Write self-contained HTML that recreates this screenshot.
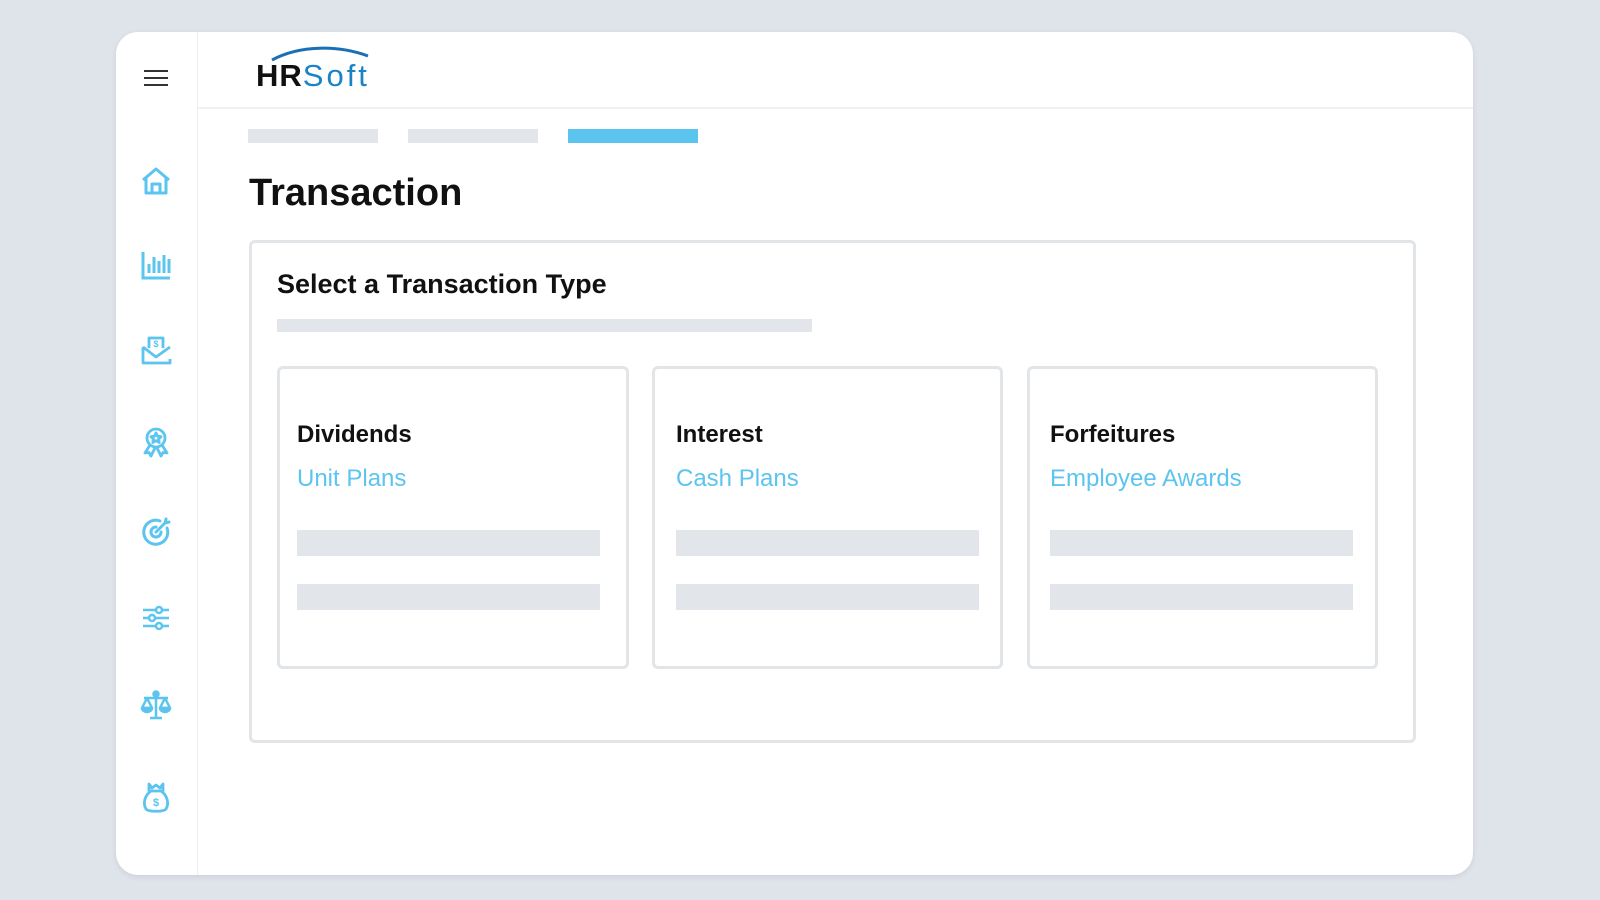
<!DOCTYPE html>
<html><head><meta charset="utf-8"><style>
*{margin:0;padding:0;box-sizing:border-box}
body{width:1600px;height:900px;background:#dfe3ea;font-family:"Liberation Sans",sans-serif;position:relative;overflow:hidden}
.card{position:absolute;left:116px;top:32px;width:1357px;height:843px;background:#fff;border-radius:22px;box-shadow:0 2px 6px rgba(0,0,0,.08);overflow:hidden}
.side{position:absolute;left:0;top:0;width:82px;height:100%;border-right:1px solid #eceef1}
.hdr{position:absolute;left:82px;top:0;right:0;height:77px;border-bottom:2px solid #f0f1f3}
.abs{position:absolute}
.bar{position:absolute;background:#e2e5e9}
.ic{position:absolute;left:24px;width:32px;height:32px}
.box{position:absolute;border:3px solid #e2e5e8;border-radius:6px}
.t{position:absolute;color:#111;font-weight:bold;white-space:nowrap}
.l{position:absolute;color:#5bc4ef;font-size:24px;white-space:nowrap}
</style></head><body>
<div class="card">
 <div class="side">
  <svg class="ic" style="top:30px" viewBox="0 0 32 32"><path d="M4 9h24M4 16h24M4 23h24" stroke="#333" stroke-width="2"/></svg>
  <svg class="ic" style="top:133px" viewBox="0 0 32 32" fill="none" stroke="#5bc4ef" stroke-width="3" stroke-linejoin="round"><path d="M3 15 16 4l13 11M6 13v15h20V13M12 28v-9h8v9"/></svg>
  <svg class="ic" style="top:217px" viewBox="0 0 32 32" fill="none" stroke="#5bc4ef" stroke-width="3"><path d="M3 3v26h27M9 24v-9M14 24V8M19 24v-12M24 24V6M29 24V10"/></svg>
  <svg class="ic" style="top:303px" viewBox="0 0 32 32" fill="none" stroke="#5bc4ef" stroke-width="2.8" stroke-linejoin="round"><path d="M9 13V3h14v10M3 12v16h27v-4M3 12l13 10 14-10"/><text x="16" y="12" font-size="9" font-weight="bold" fill="#5bc4ef" stroke="none" text-anchor="middle" font-family="Liberation Sans">$</text></svg>
  <svg class="ic" style="top:394px" viewBox="0 0 32 32" fill="none" stroke="#5bc4ef" stroke-width="2.8" stroke-linejoin="round"><circle cx="16" cy="12" r="9"/><path d="M16 7l1.6 3.3 3.4.4-2.5 2.4.7 3.4-3.2-1.8-3.2 1.8.7-3.4-2.5-2.4 3.4-.4z"/><path d="M10 19l-5 8 4-.5 2 3.5 4-8M22 19l5 8-4-.5-2 3.5-4-8"/></svg>
  <svg class="ic" style="top:484px" viewBox="0 0 32 32" fill="none" stroke="#5bc4ef" stroke-width="3" stroke-linecap="round"><path d="M27 12a12 12 0 1 1-7-7"/><path d="M21 16a5 5 0 1 1-5-5"/><path d="M16 16 25 7M25 7l1-4M25 7l4-1"/></svg>
  <svg class="ic" style="top:570px" viewBox="0 0 32 32" fill="none" stroke="#5bc4ef" stroke-width="2.5"><path d="M3 8h26M3 16h26M3 24h26"/><circle cx="19" cy="8" r="3" fill="#fff"/><circle cx="12" cy="16" r="3" fill="#fff"/><circle cx="19" cy="24" r="3" fill="#fff"/></svg>
  <svg class="ic" style="top:657px" viewBox="0 0 32 32" fill="none" stroke="#5bc4ef" stroke-width="2.5" stroke-linejoin="round"><path d="M16 5v23M10 29h12M4 9h24"/><circle cx="16" cy="5" r="2.5" fill="#5bc4ef"/><path d="M7 9 2 19h10zM25 9l-5 10h10z"/><path d="M2 19a5 4 0 0 0 10 0zM20 19a5 4 0 0 0 10 0z" fill="#5bc4ef"/></svg>
  <svg class="ic" style="top:750px" viewBox="0 0 32 32" fill="none" stroke="#5bc4ef" stroke-width="2.8" stroke-linejoin="round"><path d="M9 2l3 4 4-3 4 3 3-4v7H9zM11 9C4 14 3 22 6 27c2 3 18 3 20 0 3-5 2-13-5-18"/><text x="16" y="24" font-size="11" font-weight="bold" fill="#5bc4ef" stroke="none" text-anchor="middle" font-family="Liberation Sans">$</text></svg>
 </div>
 <div class="hdr">
  <svg class="abs" style="left:72px;top:12px" width="110" height="20" viewBox="0 0 110 20"><path d="M2 16C30 1 68 1 98 12" stroke="#1a6fb5" stroke-width="3" fill="none"/></svg>
  <div class="abs" style="left:58px;top:26px;font-size:31px;white-space:nowrap"><span style="font-weight:bold;color:#111;letter-spacing:1px">HR</span><span style="color:#1a83c6;letter-spacing:3px">Soft</span></div>
 </div>
 <div class="bar" style="left:132px;top:97px;width:130px;height:14px"></div>
 <div class="bar" style="left:292px;top:97px;width:130px;height:14px"></div>
 <div class="bar" style="left:452px;top:97px;width:130px;height:14px;background:#5bc4ef"></div>
 <div class="t" style="left:133px;top:140px;font-size:38px">Transaction</div>
 <div class="box" style="left:133px;top:208px;width:1167px;height:503px"></div>
 <div class="t" style="left:161px;top:237px;font-size:27px">Select a Transaction Type</div>
 <div class="bar" style="left:161px;top:287px;width:535px;height:13px"></div>
 <div class="box" style="left:161px;top:334px;width:352px;height:303px"></div>
 <div class="box" style="left:536px;top:334px;width:351px;height:303px"></div>
 <div class="box" style="left:911px;top:334px;width:351px;height:303px"></div>
 <div class="t" style="left:181px;top:389px;font-size:24px">Dividends</div>
 <div class="l" style="left:181px;top:433px">Unit Plans</div>
 <div class="bar" style="left:181px;top:498px;width:303px;height:26px"></div>
 <div class="bar" style="left:181px;top:552px;width:303px;height:26px"></div>
 <div class="t" style="left:560px;top:389px;font-size:24px">Interest</div>
 <div class="l" style="left:560px;top:433px">Cash Plans</div>
 <div class="bar" style="left:560px;top:498px;width:303px;height:26px"></div>
 <div class="bar" style="left:560px;top:552px;width:303px;height:26px"></div>
 <div class="t" style="left:934px;top:389px;font-size:24px">Forfeitures</div>
 <div class="l" style="left:934px;top:433px">Employee Awards</div>
 <div class="bar" style="left:934px;top:498px;width:303px;height:26px"></div>
 <div class="bar" style="left:934px;top:552px;width:303px;height:26px"></div>
</div>
</body></html>
